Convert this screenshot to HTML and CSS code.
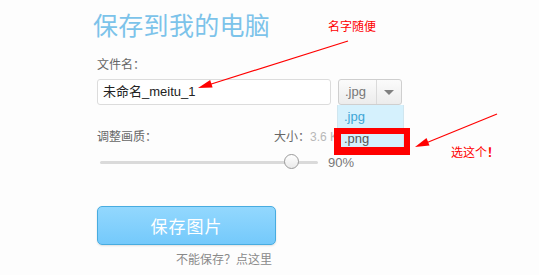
FILE: index.html
```html
<!DOCTYPE html>
<html lang="zh">
<head>
<meta charset="utf-8">
<link rel="stylesheet" href="styles.css">
</head>
<body>
<div class="page">
  <h1 class="title">保存到我的电脑</h1>
  <div class="label">文件名：</div>
  <div class="name-row">
    <div class="input">未命名_meitu_1</div>
    <div class="select">
      <span class="select-value">.jpg</span>
      <span class="select-btn"><span class="caret"></span></span>
      <ul class="dropdown">
        <li class="opt opt-active">.jpg</li>
        <li class="opt">.png</li>
      </ul>
    </div>
  </div>
  <div class="quality-row">
    <span class="label-q">调整画质：</span>
    <span class="size">大小：<span class="size-val">3.6 KB</span></span>
  </div>
  <div class="slider-row">
    <div class="track"><span class="thumb"></span></div>
    <span class="pct">90%</span>
  </div>
  <button class="save-btn">保存图片</button>
  <div class="help">不能保存？点这里</div>

  <div class="red-box"></div>
  <svg class="arrows" width="539" height="275" viewBox="0 0 539 275">
    <line x1="348" y1="41" x2="205" y2="86" stroke="#ff0000" stroke-width="1.2"/>
    <polygon points="198,88 212.6,87.6 210.2,80" fill="#ff0000"/>
    <line x1="497" y1="114" x2="421" y2="145" stroke="#ff0000" stroke-width="1.2"/>
    <polygon points="415,147 429.5,145.5 426.5,138.1" fill="#ff0000"/>
  </svg>
  <span class="note note-1">名字随便</span>
  <span class="note note-2">选这个<b>！</b></span>
</div>
</body>
</html>
```
FILE: styles.css
```css
html, body {
  margin: 0;
  padding: 0;
  width: 539px;
  height: 275px;
  overflow: hidden;
  background: #fdfdfd;
}
body {
  font-family: "Noto Sans CJK SC", "DejaVu Sans", sans-serif;
  color: #555;
}
.page {
  position: relative;
  width: 539px;
  height: 275px;
  padding: 8px 0 0 97px;
  box-sizing: border-box;
}
.title {
  margin: 0 0 0 -4px;
  font-size: 25px;
  line-height: 32px;
  font-weight: normal;
  color: #7cc3ea;
  letter-spacing: 0.3px;
}
.label {
  margin-top: 15px;
  font-size: 12px;
  line-height: 18px;
  color: #666;
}
.name-row {
  margin-top: 6px;
  display: flex;
  gap: 7px;
  align-items: flex-start;
}
.input {
  width: 234px;
  height: 26px;
  box-sizing: border-box;
  border: 1px solid #dcdcdc;
  border-radius: 3px;
  background: #fff;
  padding-left: 5px;
  font-family: "Liberation Sans", "Noto Sans CJK SC", sans-serif;
  font-size: 13px;
  line-height: 24px;
  color: #222;
}
.select {
  position: relative;
  width: 64px;
  height: 26px;
  box-sizing: border-box;
  border: 1px solid #cfcfcf;
  border-radius: 3px;
  background: linear-gradient(#fbfbfb, #ececec);
  display: flex;
}
.select-value {
  width: 38px;
  border-right: 1px solid #dadada;
  font-family: "Liberation Sans", sans-serif;
  font-size: 13px;
  line-height: 24px;
  color: #777;
  padding-left: 6px;
  box-sizing: border-box;
}
.select-btn {
  flex: 1;
  display: flex;
  align-items: center;
  justify-content: center;
}
.caret {
  width: 0;
  height: 0;
  border-left: 5px solid transparent;
  border-right: 5px solid transparent;
  border-top: 5px solid #808080;
  margin-top: 1px;
}
.dropdown {
  position: absolute;
  z-index: 2;
  left: -2px;
  top: 25px;
  width: 65px;
  margin: 0;
  padding: 0;
  list-style: none;
  background: #d5f1fd;
  border: 1px solid #d0e6ef;
  border-top: none;
}
.opt {
  font-family: "Liberation Sans", sans-serif;
  font-size: 13px;
  height: 22px;
  line-height: 22px;
  padding-left: 6px;
  color: #555;
}
.opt-active {
  color: #3ea6d6;
  padding-top: 1px;
}
.quality-row {
  margin-top: 22px;
  width: 249px;
  display: flex;
  justify-content: space-between;
  font-size: 12px;
  line-height: 18px;
  color: #666;
}
.size-val {
  color: #b8b8b8;
  font-family: "Liberation Sans", sans-serif;
}
.slider-row {
  margin-top: 8px;
  display: flex;
  align-items: center;
  height: 16px;
}
.track {
  position: relative;
  margin-left: 3px;
  width: 218px;
  height: 3px;
  background: #dadada;
  border-radius: 2px;
}
.thumb {
  position: absolute;
  left: 184px;
  top: -7px;
  width: 15px;
  height: 15px;
  box-sizing: border-box;
  border: 1px solid #9a9a9a;
  border-radius: 50%;
  background: linear-gradient(#ffffff, #eaeaea);
}
.pct {
  margin-left: 10px;
  font-family: "Liberation Sans", sans-serif;
  font-size: 13px;
  color: #777;
}
.save-btn {
  display: block;
  margin-top: 36px;
  width: 179px;
  height: 39px;
  border: 1px solid #48ace0;
  border-radius: 5px;
  background: linear-gradient(#93d8fe, #74c9fb);
  box-shadow: 0 1px 2px rgba(0,0,0,0.12);
  color: #fff;
  font-family: "Noto Sans CJK SC", sans-serif;
  font-size: 17px;
  letter-spacing: 1px;
  padding: 0;
}
.help {
  margin: 5px 0 0 79px;
  font-size: 12px;
  line-height: 18px;
  color: #8a8a8a;
}
.red-box {
  position: absolute;
  z-index: 3;
  left: 334px;
  top: 128px;
  width: 63px;
  height: 13px;
  border: 6px solid #ff0000;
  border-left-width: 7px;
  border-bottom-width: 8px;
}
.arrows {
  position: absolute;
  z-index: 4;
  left: 0;
  top: 0;
  pointer-events: none;
}
.note {
  position: absolute;
  z-index: 4;
  font-size: 12px;
  line-height: 14px;
  color: #ff0000;
}
.note-1 {
  left: 328px;
  top: 19px;
}
.note-2 {
  left: 451px;
  top: 145px;
}
.note-2 b {
  font-weight: bold;
}
```
